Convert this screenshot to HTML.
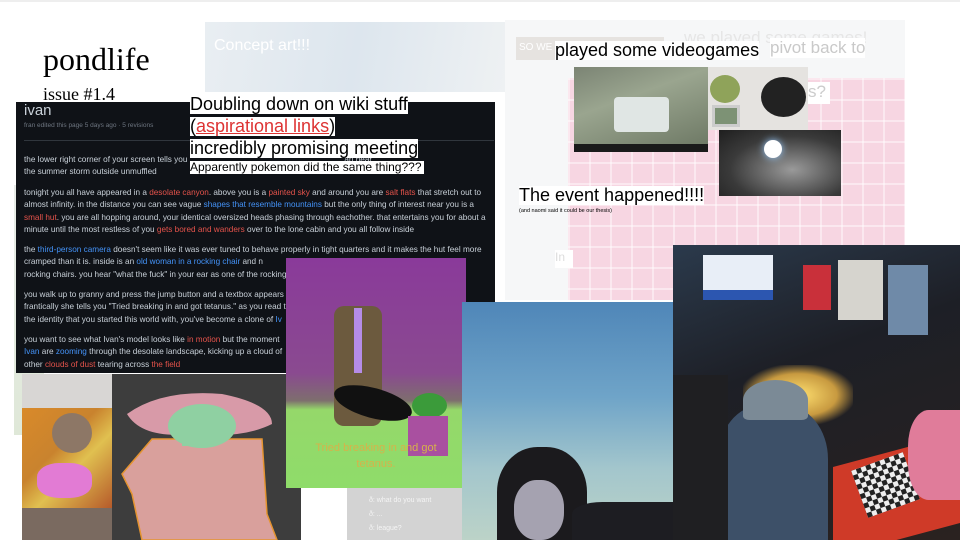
<!DOCTYPE html>
<html><head><meta charset="utf-8"><style>
*{margin:0;padding:0;box-sizing:border-box}
body{width:960px;height:540px;position:relative;overflow:hidden;background:#fff;font-family:"Liberation Sans",sans-serif}
.a{position:absolute}
.lbl{position:absolute;background:#fff;color:#000;white-space:nowrap;line-height:1.05}
.w{color:#c9d1d9;font-size:8.2px;line-height:12.3px;position:absolute;left:8px;width:470px}
.r{color:#e5534b}.b{color:#4493f8}
</style></head><body>
<div class="a" style="left:270px;top:0;width:160px;height:2px;background:#111"></div>
<div class="a" style="left:0;top:0;width:960px;height:2px;background:#eee"></div>
<!-- faint bg pieces -->
<div class="a" style="left:14px;top:185px;width:30px;height:250px;background:linear-gradient(#e8ece8,#dfe8d8)"></div>
<div class="a" style="left:205px;top:22px;width:300px;height:70px;background:linear-gradient(100deg,#e9eef2,#dde6ee 50%,#eef1f3)"></div>
<div class="a" style="left:214px;top:37px;font-size:16px;color:#fff;">Concept art!!!</div>
<div class="a" style="left:505px;top:20px;width:400px;height:280px;background:#f6f7f8"></div>
<div class="a" style="left:684px;top:28px;font-size:17px;color:#e6e6e6">we played some games!</div>
<div class="a" style="left:516px;top:37px;width:148px;height:23px;background:#e6e3e0;color:#fff;font-size:10px;padding:5px 3px">SO WE</div>
<div class="a" style="left:770px;top:38px;font-size:17px;color:#c9c9c9;background:#fff">pivot back to</div>
<div class="a" style="left:568px;top:78px;width:337px;height:222px;background-color:#f7d6e2;background-image:linear-gradient(90deg,rgba(255,255,255,.45) 2px,transparent 2px),linear-gradient(rgba(255,255,255,.45) 2px,transparent 2px);background-size:21px 21px"></div>
<div class="a" style="left:808px;top:82px;width:22px;height:22px;background:#fff;color:#ccc;font-size:17px">s?</div>
<div class="a" style="left:555px;top:250px;width:18px;height:18px;background:#fff;color:#ddd;font-size:12px">In</div>
<!-- title -->
<div class="a" style="left:43px;top:41px;font-family:'Liberation Serif',serif;font-size:32px;color:#000">pondlife</div>
<div class="a" style="left:43px;top:84px;font-family:'Liberation Serif',serif;font-size:18px;color:#000">issue #1.4</div>
<!-- wiki panel -->
<div class="a" style="left:16px;top:102px;width:479px;height:271px;background:#0f1217;overflow:hidden">
 <div class="a" style="left:8px;top:0;font-size:15px;color:#c9d1d9">ivan</div>
 <div class="a" style="left:8px;top:20px;font-size:6.5px;color:#6e7681">fran edited this page 5 days ago · 5 revisions</div>
 <div class="a" style="left:8px;top:38px;width:470px;height:1px;background:#30363d"></div>
 <div class="w" style="top:52px">the lower right corner of your screen tells you &nbsp; &nbsp; &nbsp; &nbsp; &nbsp; &nbsp; &nbsp; &nbsp; &nbsp; &nbsp; &nbsp; &nbsp; &nbsp; &nbsp; &nbsp; &nbsp; &nbsp; &nbsp; &nbsp; &nbsp; &nbsp; &nbsp; &nbsp; &nbsp; &nbsp; &nbsp; &nbsp; &nbsp; &nbsp; &nbsp; &nbsp; &nbsp; &nbsp; &nbsp; an hear<br>the summer storm outside unmuffled</div>
 <div class="w" style="top:85px">tonight you all have appeared in a <span class="r">desolate canyon</span>. above you is a <span class="r">painted sky</span> and around you are <span class="r">salt flats</span> that stretch out to almost infinity. in the distance you can see vague <span class="b">shapes that resemble mountains</span> but the only thing of interest near you is a <span class="r">small hut</span>. you are all hopping around, your identical oversized heads phasing through eachother. that entertains you for about a minute until the most restless of you <span class="r">gets bored and wanders</span> over to the lone cabin and you all follow inside</div>
 <div class="w" style="top:142px">the <span class="b">third-person camera</span> doesn't seem like it was ever tuned to behave properly in tight quarters and it makes the hut feel more cramped than it is. inside is an <span class="b">old woman in a rocking chair</span> and n<br>rocking chairs. you hear "what the fuck" in your ear as one of the rocking</div>
 <div class="w" style="top:187px">you walk up to granny and press the jump button and a textbox appears &nbsp; &nbsp; &nbsp; &nbsp; &nbsp; &nbsp; &nbsp; &nbsp; &nbsp; &nbsp; &nbsp; &nbsp; &nbsp; &nbsp; &nbsp; &nbsp; &nbsp; &nbsp; &nbsp; &nbsp; &nbsp; &nbsp; &nbsp; &nbsp; &nbsp; &nbsp; &nbsp; ake<br>frantically she tells you "Tried breaking in and got tetanus." as you read t<br>the identity that you started this world with, you've become a clone of <span class="b">Iv</span></div>
 <div class="w" style="top:232px">you want to see what Ivan's model looks like <span class="r">in motion</span> but the moment<br><span class="b">Ivan</span> are <span class="b">zooming</span> through the desolate landscape, kicking up a cloud of<br>other <span class="r">clouds of dust</span> tearing across <span class="r">the field</span></div>
</div>
<div class="lbl" style="left:190px;top:95px;font-size:18px">Doubling down on wiki stuff</div>
<div class="lbl" style="left:190px;top:117px;font-size:18px">(<span style="color:#d33;text-decoration:underline">aspirational links</span>)</div>
<div class="lbl" style="left:190px;top:139px;font-size:18px">incredibly promising meeting</div>
<div class="lbl" style="left:190px;top:161px;font-size:12px;padding-right:2px">Apparently pokemon did the same thing???</div>
<!-- right top photos -->
<div class="lbl" style="left:555px;top:41px;font-size:18px">played some videogames</div>
<div class="a" style="left:574px;top:67px;width:134px;height:85px;background:linear-gradient(160deg,#7b8474,#9aa58f 40%,#6f7a66);border-bottom:8px solid #1a1a1a">
 <div class="a" style="left:40px;top:30px;width:55px;height:35px;background:#e0e6e4;border-radius:4px"></div></div>
<div class="a" style="left:708px;top:67px;width:100px;height:63px;background:#e5e3e0">
 <div class="a" style="left:2px;top:8px;width:30px;height:28px;border-radius:50%;background:#8fa35a"></div>
 <div class="a" style="left:4px;top:38px;width:28px;height:22px;background:#7d9275;border:3px solid #ccc"></div>
 <div class="a" style="left:53px;top:10px;width:45px;height:40px;border-radius:50%;background:#222"></div></div>
<div class="a" style="left:719px;top:130px;width:122px;height:66px;background:radial-gradient(ellipse at 60% 60%,#9a9a9a,#3a3a3a 60%,#1e1e1e)">
 <div class="a" style="left:45px;top:10px;width:18px;height:18px;border-radius:50%;background:#fff;box-shadow:0 0 8px #9cf"></div></div>
<div class="lbl" style="left:519px;top:186px;font-size:18px">The event happened!!!!</div>
<div class="a" style="left:519px;top:208px;font-size:5.5px;color:#000">(and naomi said it could be our thesis)</div>
<!-- bottom left -->
<div class="a" style="left:22px;top:374px;width:90px;height:34px;background:#d8d6d4"></div>
<div class="a" style="left:22px;top:408px;width:90px;height:100px;background:linear-gradient(135deg,#d98a2a,#c9832e 40%,#e0c050 60%,#b65a2a)">
 <div class="a" style="left:30px;top:5px;width:40px;height:40px;border-radius:50%;background:#8d7766"></div>
 <div class="a" style="left:15px;top:55px;width:55px;height:35px;border-radius:40%;background:#e27bd4"></div></div>
<div class="a" style="left:22px;top:508px;width:90px;height:32px;background:#7a6a60"></div>
<div class="a" style="left:112px;top:374px;width:189px;height:166px;background:#3d3d3d">
 <svg class="a" width="189" height="166" style="left:0;top:0"><path d="M10 100 L40 65 L150 65 L155 140 L165 166 L30 166 L20 120 Z" fill="#d9a09c" stroke="#e59430" stroke-width="1.5"/><path d="M15 40 Q50 15 110 20 Q160 30 160 50 Q130 65 80 60 Q30 65 15 40Z" fill="#d89aa8"/><ellipse cx="90" cy="52" rx="34" ry="22" fill="#8fd0a2"/><rect x="70" y="60" width="20" height="12" fill="#8fd0a2"/></svg></div>
<!-- purple game -->
<div class="a" style="left:286px;top:258px;width:180px;height:230px;overflow:hidden;background:linear-gradient(#8a3a9a,#8a4a90 50%,#7e6e6e 62%,#95d86a 66%,#8fdc6a)">
 <div class="a" style="left:48px;top:48px;width:48px;height:120px;background:#6c5a3e;border-radius:10px"></div>
 <div class="a" style="left:68px;top:50px;width:8px;height:65px;background:#b58ce8"></div>
 <div class="a" style="left:47px;top:130px;width:80px;height:30px;background:#111;border-radius:50%;transform:rotate(15deg)"></div>
 <div class="a" style="left:126px;top:135px;width:35px;height:25px;background:#3b9b3a;border-radius:50%"></div>
 <div class="a" style="left:122px;top:158px;width:40px;height:40px;background:#a950a0"></div>
 <div class="a" style="left:0;top:182px;width:180px;text-align:center;font-size:11px;color:#d6b24a;line-height:16px">Tried breaking in and got<br>tetanus.</div></div>
<div class="a" style="left:301px;top:499px;width:46px;height:41px;background:#fff"></div>
<div class="a" style="left:347px;top:488px;width:115px;height:52px;background:#d3d3d3;color:#f4f4f4;font-size:7px;line-height:14px;padding:6px 22px">ð: what do you want<br>ð: ...<br>ð: league?</div>
<!-- sky -->
<div class="a" style="left:462px;top:302px;width:211px;height:238px;overflow:hidden;background:linear-gradient(#4f86b8,#6fa4c8 40%,#a3c6cc 70%,#bcd3c8)">
 <div class="a" style="left:35px;top:145px;width:90px;height:100px;border-radius:45% 45% 0 0;background:#1b1a1d"></div>
 <div class="a" style="left:52px;top:178px;width:50px;height:60px;border-radius:45%;background:#a5a2b0"></div>
 <div class="a" style="left:110px;top:200px;width:101px;height:40px;background:#1d1d22;border-radius:30% 0 0 0"></div></div>
<!-- party -->
<div class="a" style="left:673px;top:245px;width:287px;height:295px;overflow:hidden;background:linear-gradient(160deg,#2b3a4c,#1d1f26 40%,#2a2220)">
 <div class="a" style="left:30px;top:10px;width:70px;height:45px;background:#e8eef7;border-bottom:10px solid #2c56b0"></div>
 <div class="a" style="left:165px;top:15px;width:45px;height:60px;background:#d6d4ce"></div>
 <div class="a" style="left:215px;top:20px;width:40px;height:70px;background:#6f8aa8"></div>
 <div class="a" style="left:70px;top:120px;width:110px;height:60px;background:radial-gradient(ellipse,#ffe070,#c89a40 50%,transparent 75%)"></div>
 <div class="a" style="left:130px;top:20px;width:28px;height:45px;background:#c9303a"></div>
 <div class="a" style="left:160px;top:205px;width:127px;height:90px;background:#cf3a28;transform:skewY(-15deg)"></div>
 <div class="a" style="left:185px;top:215px;width:55px;height:50px;background:repeating-conic-gradient(#222 0 25%,#eee 0 50%) 0 0/10px 10px;transform:rotate(-20deg)"></div>
 <div class="a" style="left:45px;top:160px;width:110px;height:135px;background:#3d5068;border-radius:40% 40% 0 0"></div>
 <div class="a" style="left:70px;top:135px;width:65px;height:40px;background:#7b8a96;border-radius:50% 50% 10% 10%"></div>
 <div class="a" style="left:0;top:130px;width:55px;height:165px;background:#1f1f22"></div>
 <div class="a" style="left:235px;top:165px;width:52px;height:90px;background:#e07c9a;border-radius:40% 0 0 40%"></div></div>
</body></html>
